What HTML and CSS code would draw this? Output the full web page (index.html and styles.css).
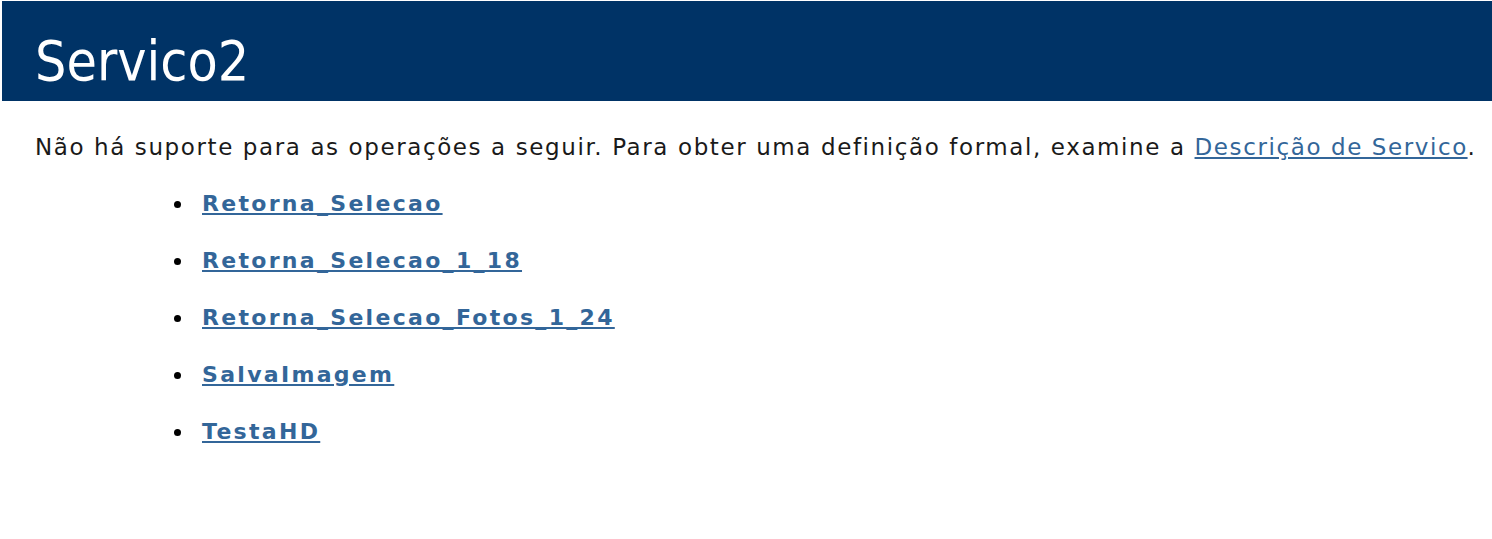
FILE: index.html
```html
<!DOCTYPE html>
<html lang="pt">
<head>
    <meta charset="UTF-8">
    <title>Servico2 Serviço Web</title>
    <link rel="stylesheet" href="styles.css">
</head>
<body>
    <div id="content">
        <p class="heading1">Servico2</p>

        <p class="intro">Não há suporte para as operações a seguir. Para obter uma definição formal, examine a <a href="#">Descrição de Servico</a>.</p>

        <ul class="operations">
            <li><a href="#">Retorna_Selecao</a></li>
            <li><a href="#">Retorna_Selecao_1_18</a></li>
            <li><a href="#">Retorna_Selecao_Fotos_1_24</a></li>
            <li><a href="#">SalvaImagem</a></li>
            <li><a href="#">TestaHD</a></li>
        </ul>
    </div>
</body>
</html>
```

FILE: styles.css
```css
body { margin: 0; background-color: #ffffff; font-family: "DejaVu Sans", Verdana, sans-serif; color: #000000; }
#content { padding-top: 1px; }
a { color: #336699; }
.heading1 { margin: 0 0 0 2px; height: 80px; padding: 20px 0 0 33px; background-color: #003366; color: #ffffff; font-family: "DejaVu Sans", Tahoma, sans-serif; font-size: 55px; line-height: 80px; font-stretch: condensed; }
.intro { margin: 31px 0 0 35px; font-size: 23px; line-height: 30px; letter-spacing: 1.6px; color: #1a1a1a; }
.intro a { color: #336699; }
.operations { margin: 27px 0 0 0; padding-left: 194px; font-size: 22px; line-height: 30px; }
.operations li { margin-bottom: 27px; padding-left: 8px; }
.operations a { font-weight: bold; letter-spacing: 2.3px; }
```
